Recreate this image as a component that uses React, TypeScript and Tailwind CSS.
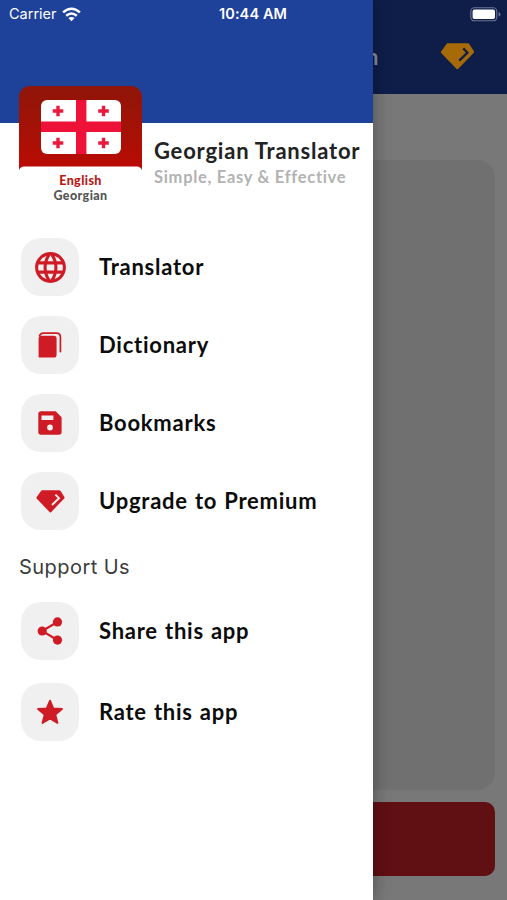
import type { ReactNode } from "react";
import { MdLanguage } from "react-icons/md";

const BookIcon = () => (
  <svg width="24" height="26" viewBox="0 0 24 26" fill="none">
    <path d="M.6 6.4Q.6 3.8 3.2 3.8H15.6Q18.6 3.8 18.6 6.8V22.4Q18.6 25.6 15.4 25.6H.6Z" fill="#cf1b25" />
    <path d="M1.6 3.6Q2.6 1.2 5.4 1.2H18.4Q22.4 1.2 22.4 5.2V19.6" stroke="#cf1b25" strokeWidth="1.7" strokeLinecap="round" />
  </svg>
);

const SaveIcon = () => (
  <svg width="24" height="24" viewBox="0 0 24 24">
    <path
      fillRule="evenodd"
      fill="#cf1b25"
      d="M3 .3H17.6L23.6 6.2V21Q23.6 23.7 20.9 23.7H3Q.3 23.7 .3 21V3Q.3 .3 3 .3ZM3.5 4.4V8.9H15.4V4.4ZM12 13.6A2.9 2.9 0 1 0 12 19.4A2.9 2.9 0 1 0 12 13.6Z"
    />
  </svg>
);

const DiamondIcon = ({ className, slash }: { className: string; slash: string }) => (
  <svg viewBox="0 0 29 23" className={className}>
    <path
      d="M6 .3H23.2Q24.1 .3 24.6 1L28.4 6.9Q28.9 7.8 28.2 8.6L15 22.2Q14.4 22.8 13.8 22.2L.6 8.6Q0 7.8 .7 7L5 1Q5.4 .3 6 .3Z"
      fill="currentColor"
    />
    <path d="M19.4 4.6L23 8.2L16 15" fill="none" stroke={slash} strokeWidth="1.9" />
  </svg>
);

const ShareIcon = () => (
  <svg width="26" height="28" viewBox="0 0 26 28" fill="#cf1b25">
    <path d="M20.3 5L5.2 14L20.3 23" fill="none" stroke="#cf1b25" strokeWidth="2.1" />
    <circle cx="20.5" cy="4.9" r="4.6" />
    <circle cx="5.2" cy="14" r="4.6" />
    <circle cx="20.5" cy="23.1" r="4.6" />
  </svg>
);

const StarIcon = () => (
  <svg width="28" height="28" viewBox="0 0 28 28">
    <path
      d="M14 2.6L17.3 10.3L26 11L19.4 16.6L21.5 25L14 20.5L6.5 25L8.6 16.6L2 11L10.7 10.3Z"
      fill="#cf1b25"
      stroke="#cf1b25"
      strokeWidth="1.8"
      strokeLinejoin="round"
    />
  </svg>
);

const WifiIcon = () => (
  <svg width="19" height="15" viewBox="0 0 19 15" fill="none" stroke="white" strokeWidth="2.5">
    <path d="M1.1 5.4Q9.5 -2 17.9 5.4" />
    <path d="M4.2 8.8Q9.5 4.2 14.8 8.8" />
    <path d="M9.5 14.2L6.4 11.1Q9.5 8.8 12.6 11.1Z" fill="white" stroke="none" />
  </svg>
);

const BatteryIcon = () => (
  <svg width="31" height="15" viewBox="0 0 31 15">
    <rect x=".8" y=".8" width="26" height="13" rx="3.6" fill="none" stroke="#6d7698" strokeWidth="1.1" />
    <rect x="2.6" y="2.6" width="22.4" height="9.4" rx="1.8" fill="white" />
    <path d="M28.6 5Q30.4 5.6 30.4 7.3T28.6 9.6Z" fill="#6d7698" />
  </svg>
);

const FlagIcon = () => (
  <svg width="80" height="54" viewBox="0 0 80 54">
    <rect width="80" height="54" rx="6" fill="white" />
    <path d="M35 0H45.4V54H35ZM0 21.6H80V32H0Z" fill="#ef1238" />
    <path
      d="M17 5.7V16.3M11.7 11H22.3M62.5 5.7V16.3M57.2 11H67.8M17 37.7V48.3M11.7 43H22.3M62.5 37.7V48.3M57.2 43H67.8"
      stroke="#ea1a3f"
      strokeWidth="3.4"
    />
  </svg>
);

function AppLogo() {
  return (
    <div className="w-[123px] shrink-0">
      <div className="flex h-[80px] justify-center rounded-t-[11px] bg-gradient-to-b from-[#8e1508] to-[#b90b04] pt-[14px]">
        <FlagIcon />
      </div>
      <svg width="123" height="4" viewBox="0 0 123 4" className="block">
        <path d="M0 0H123V4Q121.5 .5 118 .5H5Q1.5 .5 0 4Z" fill="#b90b04" />
      </svg>
      <div className="pt-1 text-center font-['Lato',sans-serif] text-[12.5px] leading-[14.5px] font-black tracking-[0.4px]">
        <div className="text-[#b71914]">English</div>
        <div className="text-[#555]">Georgian</div>
      </div>
    </div>
  );
}

function MenuItem({ icon, label }: { icon: ReactNode; label: string }) {
  return (
    <button className="flex items-center gap-5 text-left">
      <span className="flex size-[58px] items-center justify-center rounded-[20px] bg-[#f0f0f0] text-[#cf1b25]">
        {icon}
      </span>
      <span className="pb-[2px] font-['Lato',sans-serif] text-[22px] font-bold tracking-[0.75px] whitespace-nowrap text-[#0c0c0c] [word-spacing:1px]">
        {label}
      </span>
    </button>
  );
}

const mainItems = [
  { label: "Translator", icon: <MdLanguage size={37} /> },
  { label: "Dictionary", icon: <BookIcon /> },
  { label: "Bookmarks", icon: <SaveIcon /> },
  { label: "Upgrade to Premium", icon: <DiamondIcon className="h-[23px] w-[29px]" slash="#f0f0f0" /> },
];

const supportItems = [
  { label: "Share this app", icon: <ShareIcon /> },
  { label: "Rate this app", icon: <StarIcon /> },
];

function Drawer() {
  return (
    <aside className="z-10 h-full w-[373px] shrink-0 bg-white shadow-[0_0_16px_rgba(0,0,0,0.35)]">
      <div className="h-[123px] bg-[#1e4199]">
        <div className="flex h-7 items-center pl-[9px] font-['Inter',sans-serif] text-white">
          <span className="w-[53px] text-[14.5px]">Carrier</span>
          <WifiIcon />
          <span className="ml-[138px] text-[14.5px] font-semibold tracking-[0.1px] whitespace-nowrap">10:44 AM</span>
        </div>
      </div>

      <div className="-mt-[37px] flex h-[152px] gap-3 pl-[19px]">
        <AppLogo />
        <div className="pt-[51px] font-['Lato',sans-serif] font-bold whitespace-nowrap">
          <h1 className="text-[22px] leading-7 tracking-[0.78px] text-[#222]">Georgian Translator</h1>
          <p className="text-[16.5px] leading-6 tracking-[0.7px] text-[#b2b2b2]">Simple, Easy &amp; Effective</p>
        </div>
      </div>

      <nav className="flex flex-col gap-5 pl-[21px]">
        {mainItems.map((item) => (
          <MenuItem key={item.label} {...item} />
        ))}
      </nav>

      <h2 className="mt-[23px] pl-[19px] font-['Inter',sans-serif] text-[20px] leading-7 tracking-[0.45px] text-[#3c3c3c]">
        Support Us
      </h2>

      <nav className="mt-[21px] flex flex-col gap-[23px] pl-[21px]">
        {supportItems.map((item) => (
          <MenuItem key={item.label} {...item} />
        ))}
      </nav>
    </aside>
  );
}

function DimmedPage() {
  return (
    <main className="flex h-full flex-1 flex-col bg-[#787878]">
      <header className="h-[94px] bg-[#0e1e49]">
        <div className="flex h-7 items-center justify-end pr-[6px]">
          <BatteryIcon />
        </div>
        <div className="flex h-14 items-center justify-between pr-[32px]">
          <span className="-ml-[7px] font-['Lato',sans-serif] text-[22px] font-bold text-[#868d9d]">n</span>
          <DiamondIcon className="h-[27px] w-[35px] text-[#a66a08]" slash="#0e1e49" />
        </div>
      </header>
      <div className="mt-[66px] mr-3 h-[630px] rounded-r-[18px] bg-[#707070]" />
      <div className="mt-3 mr-3 h-[74px] rounded-r-[10px] bg-[#600f13]" />
    </main>
  );
}

export default function App() {
  return (
    <div className="flex h-[900px] w-[507px] overflow-hidden">
      <Drawer />
      <DimmedPage />
    </div>
  );
}
